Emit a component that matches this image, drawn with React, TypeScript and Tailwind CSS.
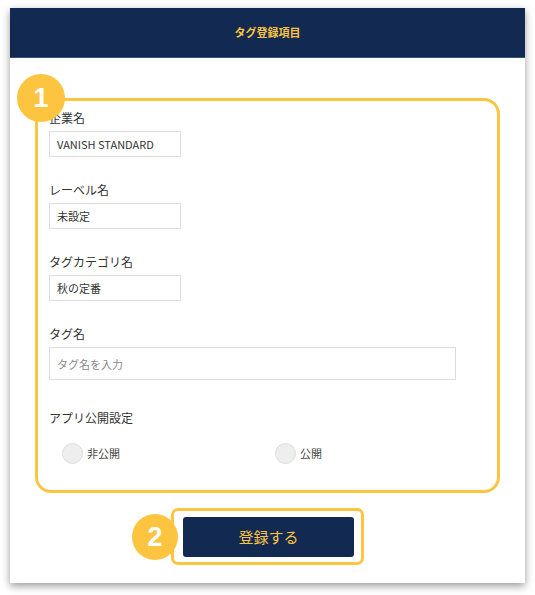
import type { ReactNode } from "react";

const font = { fontFamily: '"Noto Sans CJK JP", "Noto Sans", sans-serif' };

/** Numbered yellow marker that sits over the corner of a highlighted block. */
function Marker({ n, className }: { n: number; className: string }) {
  return (
    <span
      className={`absolute flex items-center justify-center rounded-full bg-[#fdc43f] text-[27px] font-bold text-white ${className}`}
      style={{ fontFamily: '"Liberation Sans", Arial, sans-serif' }}
    >
      {n}
    </span>
  );
}

function Field({ label, children }: { label: string; children: ReactNode }) {
  return (
    <div className="flex flex-col">
      <span className="text-[12px] leading-4 text-[#333]">{label}</span>
      <div className="mt-[5px]">{children}</div>
    </div>
  );
}

function ReadOnlyBox({ value }: { value: string }) {
  return (
    <div className="flex h-[26px] w-[132px] items-center border border-[#ddd] px-[7px] text-[11px] text-[#333]">
      {value}
    </div>
  );
}

function Radio({ label }: { label: string }) {
  return (
    <label className="flex items-center gap-[4px]">
      <span className="h-[21px] w-[21px] rounded-full border border-[#ddd] bg-[#eee]" />
      <span className="text-[11px] text-[#444]">{label}</span>
    </label>
  );
}

export default function App() {
  return (
    <div className="min-h-[595px] bg-white pt-[8px] pl-[10px]" style={font}>
      <div className="w-[515px] bg-white pb-[18px] shadow-[0_3px_8px_rgba(0,0,0,0.4)]">
        <div className="flex h-[50px] items-center justify-center border-b border-[#3a5078] bg-[#122a51]">
          <span className="text-[11px] font-bold text-[#fdc43f]">タグ登録項目</span>
        </div>

        <div className="px-[25px] pt-[40px]">
          <div className="relative rounded-[16px] border-[3px] border-[#fdc43f] pt-[9px] pr-[40px] pb-[26px] pl-[11px]">
            <Marker n={1} className="-top-[27px] -left-[21px] h-[48px] w-[48px]" />
            <div className="flex flex-col gap-[25px]">
              <Field label="企業名">
                <ReadOnlyBox value="VANISH STANDARD" />
              </Field>
              <Field label="レーベル名">
                <ReadOnlyBox value="未設定" />
              </Field>
              <Field label="タグカテゴリ名">
                <ReadOnlyBox value="秋の定番" />
              </Field>
              <Field label="タグ名">
                <input
                  placeholder="タグ名を入力"
                  className="h-[33px] w-[407px] border border-[#ddd] px-[7px] text-[11px] text-[#333] outline-none placeholder:text-[#888]"
                />
              </Field>
            </div>
            <div className="mt-[30px] text-[12px] leading-4 text-[#333]">アプリ公開設定</div>
            <div className="mt-[17px] flex pl-[13px]">
              <div className="w-[213px]">
                <Radio label="非公開" />
              </div>
              <Radio label="公開" />
            </div>
          </div>
        </div>

        <div className="mt-[15px] flex justify-center">
          <div className="relative rounded-[7px] border-[3px] border-[#fdc43f] pt-[6px] pr-[7px] pb-[5px] pl-[9px]">
            <Marker n={2} className="top-[3px] -left-[42px] h-[46px] w-[46px]" />
            <button className="flex h-[40px] w-[171px] items-center justify-center rounded-[3px] bg-[#122a51] text-[15px] text-[#fdc43f]">
              登録する
            </button>
          </div>
        </div>
      </div>
    </div>
  );
}
